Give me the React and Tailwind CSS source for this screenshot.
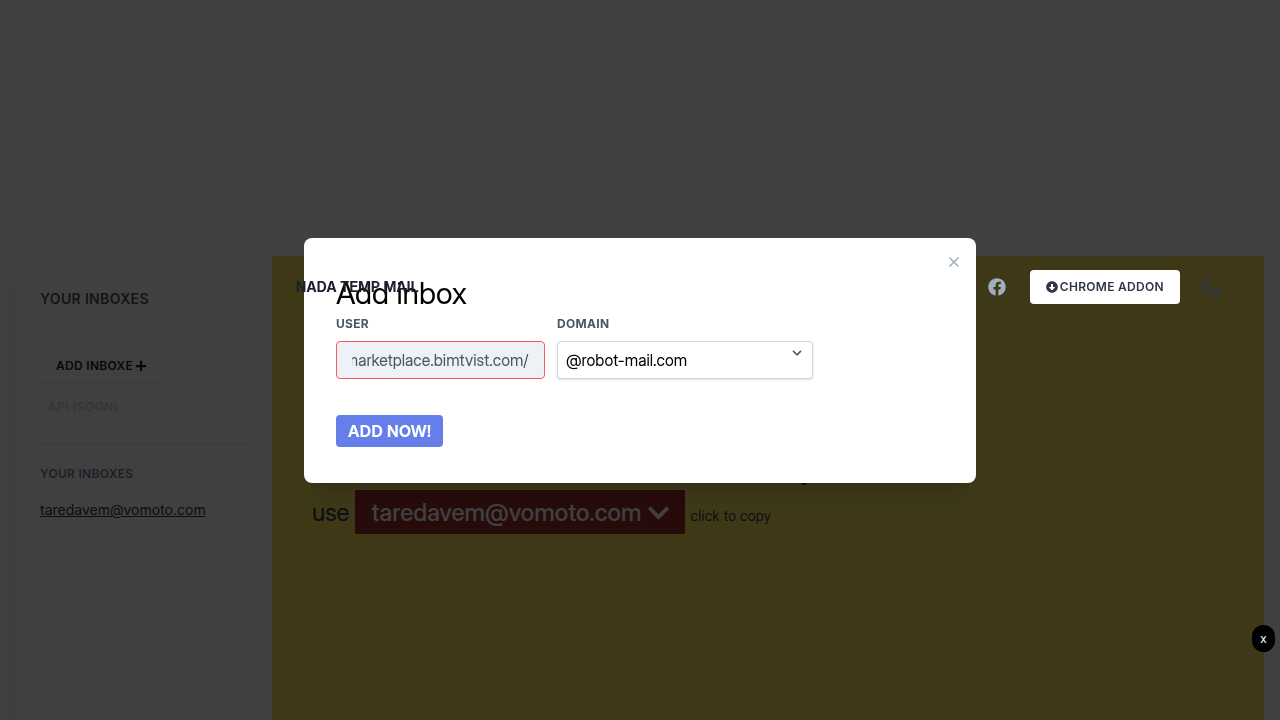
import { useEffect, useRef, useState } from "react";
import { FaFacebook, FaPlus, FaChevronDown, FaArrowAltCircleDown } from "react-icons/fa";

function TopBar() {
  return (
    <header className="relative z-50 flex items-center justify-between px-6 pt-3.5">
      <a href="#home" className="font-['Inter_Display','Inter',sans-serif] text-sm font-bold tracking-wide text-[#1a202c]">NADA TEMP MAIL</a>
      <div className="flex items-center pr-4">
        <a href="#facebook" aria-label="Facebook" className="mr-6 text-[#a0aec0]">
          <FaFacebook className="h-[18px] w-[18px]" />
        </a>
        <button className="flex h-[34px] items-center gap-0.5 rounded bg-white px-4 text-xs font-semibold tracking-wide text-[#2d3748]">
          <FaArrowAltCircleDown className="h-3 w-3" />
          CHROME ADDON
        </button>
        <button aria-label="Dark mode" className="ml-5 text-[#2d3748]">
          <svg className="h-6 w-6" fill="none" stroke="currentColor" strokeWidth="2" strokeLinecap="round" strokeLinejoin="round" viewBox="0 0 24 24">
            <path d="M20.354 15.354A9 9 0 018.646 3.646 9.003 9.003 0 0012 21a9.003 9.003 0 008.354-5.646z" />
          </svg>
        </button>
      </div>
    </header>
  );
}

function Sidebar() {
  return (
    <aside className="w-64 shrink-0 px-6 pt-[31px] shadow-xl">
      <h2 className="text-sm leading-6 font-semibold tracking-wide text-[#4a5568]">YOUR INBOXES</h2>
      <button className="mt-[38px] flex h-[34px] items-center gap-0.5 rounded-md px-4 text-xs font-semibold tracking-wide text-[#1a202c] shadow">
        ADD INBOXE
        <FaPlus className="h-3 w-3" />
      </button>
      <p className="mt-4 pl-2 text-xs font-semibold tracking-wide text-[#cbd5e0]">API (SOON)</p>
      <hr className="mt-[29px] border-[#e2e8f0]" />
      <h3 className="mt-[21px] text-xs font-semibold tracking-wide text-[#718096]">YOUR INBOXES</h3>
      <a href="#inbox" className="mt-[18px] block text-sm text-[#2d3748] underline">taredavem@vomoto.com</a>
    </aside>
  );
}

function AddInboxDialog() {
  const [user, setUser] = useState("https://marketplace.bimtvist.com/");
  const field = useRef(null);
  useEffect(() => {
    field.current.scrollLeft = field.current.scrollWidth;
  }, []);
  return (
    <div className="fixed inset-0 z-40 flex items-center justify-center bg-black/75 font-['Inter_Display','Inter',sans-serif]">
      <div role="dialog" aria-labelledby="dialog-title" className="relative w-full max-w-2xl rounded-lg bg-white px-8 pt-[37px] pb-9 shadow-xl">
        <button aria-label="Close" className="absolute top-3.5 right-3 text-[#a0aec0]">
          <svg className="h-5 w-5" viewBox="0 0 20 20" fill="none" stroke="currentColor" strokeWidth="1.5">
            <path d="M5.5 5.5l9 9M14.5 5.5l-9 9" />
          </svg>
        </button>
        <h1 id="dialog-title" className="text-3xl text-black">Add inbox</h1>
        <div className="mt-[5px] flex gap-3">
          <div>
            <label htmlFor="user" className="block font-['Inter',sans-serif] text-xs font-bold tracking-wide text-[#4a5568]">USER</label>
            <input
              id="user"
              ref={field}
              value={user}
              onChange={(e) => setUser(e.target.value)}
              className="mt-[9px] block h-[38px] w-[209px] rounded border border-[#fc5a5a] bg-[#edf2f7] px-[15px] text-base text-[#4a5568]"
            />
          </div>
          <div>
            <label htmlFor="domain" className="block font-['Inter',sans-serif] text-xs font-bold tracking-wide text-[#4a5568]">DOMAIN</label>
            <div className="relative mt-[9px]">
              <select id="domain" className="block h-[38px] w-64 appearance-none rounded border border-[#cbd5e0] bg-white px-2 text-base text-black shadow">
                <option>@robot-mail.com</option>
              </select>
              <svg className="pointer-events-none absolute top-1 right-2 h-4 w-4 fill-[#4a5568]" viewBox="0 0 20 20">
                <path d="M9.293 12.95l.707.707L15.657 8l-1.414-1.414L10 10.828 5.757 6.586 4.343 8z" />
              </svg>
            </div>
          </div>
        </div>
        <button className="mt-9 h-8 rounded bg-[#667eea] px-3 text-base font-bold tracking-wide text-white">ADD NOW!</button>
      </div>
    </div>
  );
}

export default function App() {
  return (
    <div className="h-screen overflow-hidden bg-white font-['Inter',sans-serif]">
      <div className="flex min-h-full px-4 pt-64">
        <Sidebar />
        <main className="min-h-[464px] flex-1 bg-[#f6e05e]">
          <TopBar />
          <section className="px-10 pt-[152px] font-['Inter_Display','Inter',sans-serif] text-[#2d3748]">
            <p className="mb-0.5 text-2xl font-semibold">Create a new inbox and receive mails instantly</p>
            <div className="flex items-baseline text-2xl">
              use
              <button className="mx-1.5 flex h-11 items-center gap-1.5 bg-[#9b2c2c] px-4 pt-0.5 font-medium text-white">
                taredavem@vomoto.com
                <FaChevronDown className="h-6 w-[21px]" />
              </button>
              <span className="text-sm tracking-wide">click to copy</span>
            </div>
          </section>
        </main>
      </div>
      <AddInboxDialog />
      <button aria-label="Close ad" className="fixed right-[5px] bottom-[68px] z-50 h-[27px] w-[23px] rounded-full bg-black font-['Noto_Sans',sans-serif] text-xs text-white">x</button>
    </div>
  );
}
